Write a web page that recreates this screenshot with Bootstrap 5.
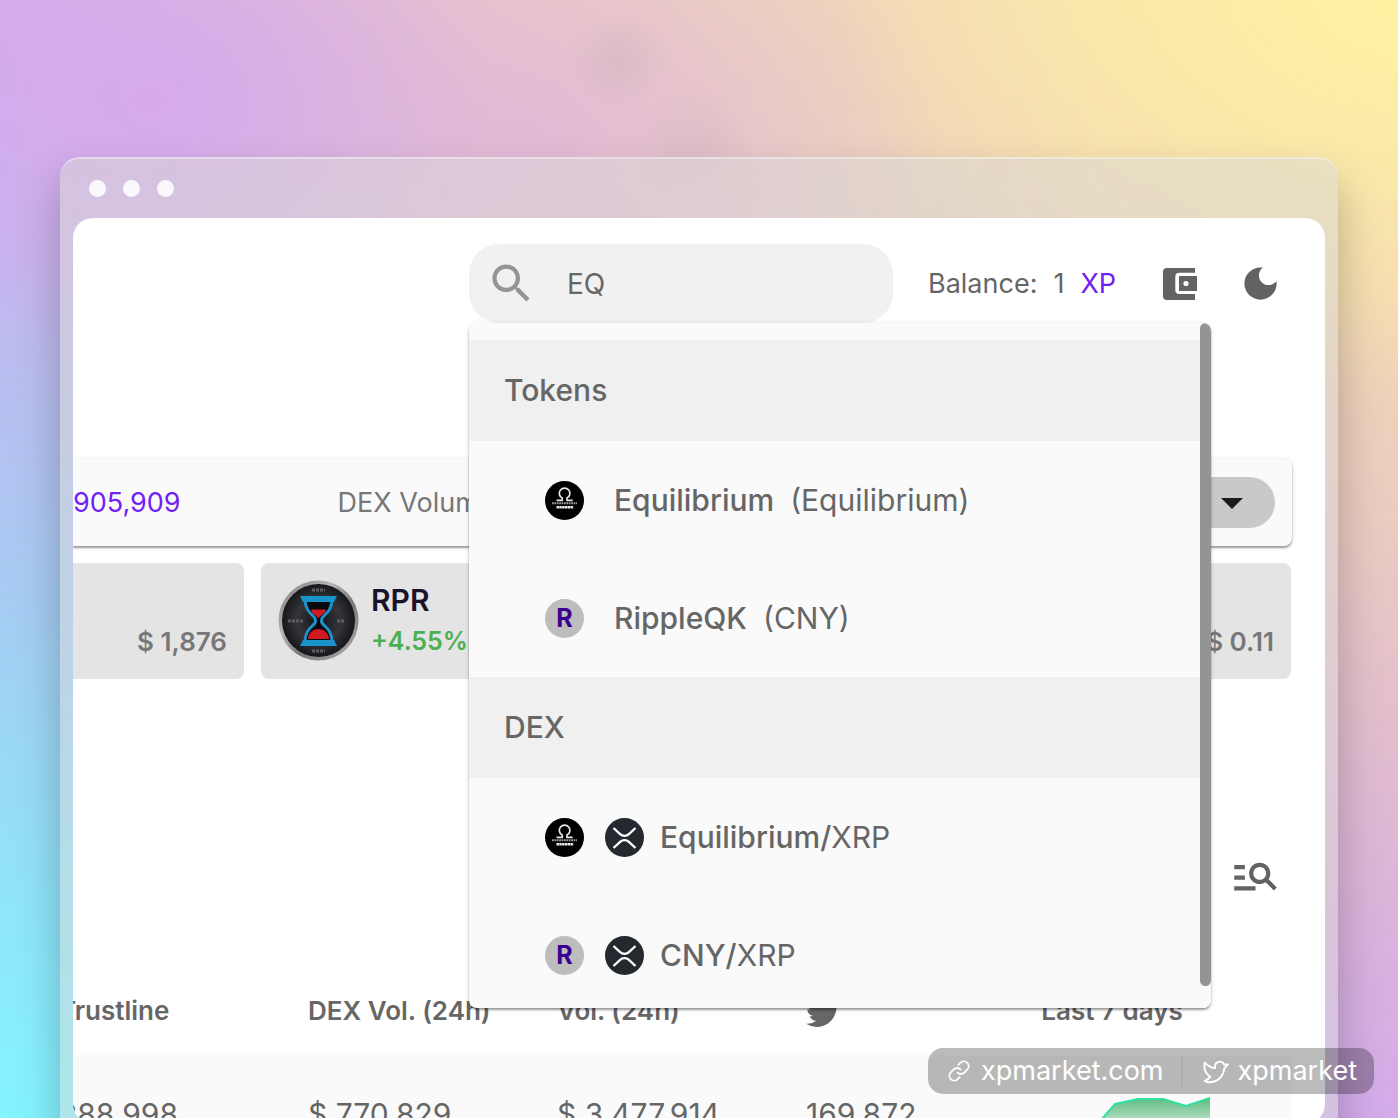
<!DOCTYPE html>
<html lang="en">
<head>
<meta charset="utf-8">
<meta name="viewport" content="width=device-width, initial-scale=1">
<title>XPmarket</title>
<link href="https://cdn.jsdelivr.net/npm/bootstrap@5.3.0/dist/css/bootstrap.min.css" rel="stylesheet">
<style>
  :root { --ink: #666; --violet: #7120f5; --paper: #fafafa; }
  body {
    height: 100vh; overflow: hidden; position: relative;
    font-family: Inter, "Liberation Sans", sans-serif; font-size: 27px; line-height: 36px; color: var(--ink);
    background: linear-gradient(180deg, #d3abef 0%, #c9b1ef 14%, #bdbbef 30%, #a5cdf3 55%, #90e4fa 80%, #84f4ff 100%);
  }
  .glow { position: absolute; inset: 0; z-index: -1; }
  .glow-left { background: radial-gradient(ellipse 340px 260px at 150px 100px, #d6a9ec 0%, #d6a9ec00 100%); }
  .glow-corner { background: radial-gradient(ellipse 560px 400px at 100% 0, #fff2a2 0%, #fdeaa800 100%); }
  .glow-smoke {
    background:
      radial-gradient(circle 50px at 620px 60px, #b8a8b040 0%, #b8a8b000 100%),
      radial-gradient(circle 60px at 695px 145px, #b8a8b030 0%, #b8a8b000 100%),
      radial-gradient(ellipse 420px 320px at 520px 150px, #e2b4dacc 0%, #e2b4da00 100%);
  }
  .glow-right {
    background: linear-gradient(190deg, #f6e0b0 0%, #f1d6b6 22%, #eaccc0 38%, #e3bfcc 52%, #dab3dc 68%, #d0a9ee 86%, #cfa9f0 100%);
    -webkit-mask-image: linear-gradient(80deg, transparent 10%, #000b 46%, #000 80%);
    mask-image: linear-gradient(80deg, transparent 10%, #000b 46%, #000 80%);
  }
  .stage { padding: 157px 60px 0; }
  .browser {
    padding: 0 13px 13px; border-radius: 20px; background: #d8d8d880;
    border-top: 2px solid #ffffff66;
    box-shadow: 0 24px 44px #00000040;
  }
  .browser-bar { height: 59px; padding-left: 16px; gap: 17px; }
  .dot { width: 17px; height: 17px; border-radius: 50%; background: #faf8fc; }
  .sheet { height: calc(100vh - 212px); background: #fff; border-radius: 20px; overflow: hidden; padding: 26px 33px 0 0; }

  .finder { position: relative; width: 424px; margin-right: 35px; }
  .finder-box { height: 79px; padding-left: 17px; gap: 30px; border-radius: 30px; background: #f1f1f1; color: #949494; }
  .finder-box input { border: 0; background: none; outline: 0; width: 260px; padding: 0; color: var(--ink); font-size: 28px; }
  .balance { width: 193px; margin-right: 35px; white-space: nowrap; }
  .header-tools { gap: 32px; }
  .plain-btn { border: 0; background: none; padding: 0; width: 48px; height: 48px; color: #636363; }
  .violet { color: var(--violet); }

  .results {
    position: absolute; top: 79px; left: 0; z-index: 5; width: 742px; height: 685px; overflow: hidden;
    padding-top: 17px; background: var(--paper); border-radius: 8px;
  }
  .results-shade { position: absolute; top: 79px; left: 0; z-index: 4; width: 742px; height: 685px; border-radius: 8px; box-shadow: 0 2px 2px #0005, 0 1px 5px #0002; }
  .group-title { height: 101px; padding-left: 35px; padding-bottom: 2px; margin: 0; background: #f0f0f0; font-size: 30px; font-weight: 500; line-height: 36px; }
  .hit { height: 118px; padding-left: 76px; color: var(--ink); text-decoration: none; white-space: nowrap; font-size: 30px; }
  .hit svg { flex: none; }
  .hit b { font-weight: 500; }
  .hit-token { gap: 30px; }
  .hit-pair { gap: 16px; }
  .coin-pair { gap: 21px; }
  .letter { width: 39px; height: 39px; border-radius: 50%; background: #bdbdbd; color: #3b0091; font-size: 25px; font-weight: 700; line-height: 39px; text-align: center; }
  .thumb { position: absolute; top: 0; right: 0; width: 11px; height: 663px; border-radius: 6px; background: #949494; }

  .stats { height: 87px; margin-top: 136px; padding-right: 17px; background: var(--paper); border-radius: 0 8px 8px 0; box-shadow: 0 2px 2px #0005, 0 1px 5px #0002; }
  .stat-name { margin-left: 157px; color: #777; }
  .period { position: relative; width: 150px; }
  .period select { appearance: none; width: 100%; height: 51px; border: 0; border-radius: 26px; background: #c9c9c9; padding-left: 20px; color: #1b1b1b; font-size: 20px; }
  .period svg { position: absolute; right: 32px; top: 21px; pointer-events: none; }

  .tickers { gap: 17px; margin-top: 17px; padding-right: 1px; }
  .ticker { flex: 0 0 332px; height: 116px; padding: 17px; border-radius: 8px; background: #e4e4e4; font-size: 26px; font-weight: 600; line-height: 41px; }
  .price { color: #777; font-weight: 600; }
  .ticker-name { color: #17132a; font-size: 30px; }
  .gain { color: #4caf50; font-size: 25px; }

  .tools { margin-top: 172px; padding-right: 13px; margin-bottom: 68px; }
  .tokens { table-layout: fixed; width: calc(100% + 14px); margin-left: -14px; }
  .tokens th { width: 249px; height: 88px; padding: 0; font-weight: 600; font-size: 26px; white-space: nowrap; }
  .tokens td { height: 118px; padding: 0; background: var(--paper); font-size: 30px; white-space: nowrap; }
  .tokens .followers { width: auto; }
  .tokens .spark { width: 278px; }
  .spark > div { width: 196px; text-align: center; }

  .credit { position: absolute; right: 24px; bottom: 24px; z-index: 10; height: 46px; border-radius: 15px; background: #00000044; padding: 0 17px; color: #fff; font-size: 27px; line-height: 46px; }
  .credit a { color: #fff; text-decoration: none; }
  .credit-rule { width: 2px; height: 30px; background: #0000000d; margin: 0 17px; }
</style>
<script src="https://cdn.jsdelivr.net/npm/bootstrap@5.3.0/dist/js/bootstrap.bundle.min.js"></script>
</head>
<body>
<div class="glow glow-right"></div>
<div class="glow glow-smoke"></div>
<div class="glow glow-left"></div>
<div class="glow glow-corner"></div>

<svg width="0" height="0" class="position-absolute" aria-hidden="true">
  <symbol id="eq" viewBox="0 0 39 39">
    <circle cx="19.500" cy="19.500" r="19.500" fill="#000"/>
    <path d="M11.500 19.300h5.700v-2.200a5.300 5.300 0 1 1 4.800 0v2.200h5.700" fill="none" stroke="#e4e4e4" stroke-width="1.700"/>
    <path d="M7 22.300h25" stroke="#999" stroke-width="2" stroke-dasharray="1.800 .6"/>
    <path d="M11.500 26.300h17" stroke="#eee" stroke-width="2.400" stroke-dasharray="2.400 .4"/>
  </symbol>
  <symbol id="xrp" viewBox="0 0 39 39">
    <circle cx="19.500" cy="19.500" r="19.500" fill="#23292f"/>
    <path d="M8.500 10l6.600 6.200a6.400 6.400 0 0 0 8.800 0L30.500 10M8.500 30l6.600-6.200a6.400 6.400 0 0 1 8.800 0L30.500 30" fill="none" stroke="#fff" stroke-width="2.300"/>
  </symbol>
</svg>

<main class="stage">
  <div class="browser">
    <div class="browser-bar d-flex align-items-center">
      <span class="dot"></span><span class="dot"></span><span class="dot"></span>
    </div>
    <div class="sheet">
      <header class="d-flex justify-content-end align-items-center pe-2">
        <div class="finder">
          <label class="finder-box d-flex align-items-center" for="find">
            <svg width="51" height="51" viewBox="0 0 24 24" fill="currentColor" role="img" aria-label="Search"><path d="M15.500 14h-.79l-.28-.27C15.410 12.590 16 11.110 16 9.500 16 5.910 13.090 3 9.500 3S3 5.910 3 9.500 5.910 16 9.500 16c1.610 0 3.090-.59 4.230-1.570l.27.28v.79l5 4.990L20.490 19l-4.990-5zm-6 0C7.010 14 5 11.990 5 9.500S7.010 5 9.500 5 14 7.010 14 9.500 11.990 14 9.500 14z"/></svg>
            <input id="find" type="text" value="EQ">
          </label>
          <div class="results-shade"></div>
          <div class="results">
            <h2 class="group-title d-flex align-items-center">Tokens</h2>
            <a class="hit hit-token d-flex align-items-center" href="#"><svg width="39" height="39"><use href="#eq"/></svg><span><b>Equilibrium</b><span class="ms-3">(Equilibrium)</span></span></a>
            <a class="hit hit-token d-flex align-items-center" href="#"><span class="letter">R</span><span><b>RippleQK</b><span class="ms-3">(CNY)</span></span></a>
            <h2 class="group-title d-flex align-items-center">DEX</h2>
            <a class="hit hit-pair d-flex align-items-center" href="#"><span class="coin-pair d-flex"><svg width="39" height="39"><use href="#eq"/></svg><svg width="39" height="39"><use href="#xrp"/></svg></span><span><b>Equilibrium/</b>XRP</span></a>
            <a class="hit hit-pair d-flex align-items-center" href="#"><span class="coin-pair d-flex"><span class="letter">R</span><svg width="39" height="39"><use href="#xrp"/></svg></span><span><b>CNY/</b>XRP</span></a>
            <div class="thumb"></div>
          </div>
        </div>
        <div class="balance d-flex"><span>Balance:</span><span class="ms-3">1</span><a href="#" class="violet text-decoration-none ms-3">XP</a></div>
        <div class="header-tools d-flex">
          <button class="plain-btn d-flex align-items-center justify-content-center" type="button" aria-label="Wallet">
            <svg width="34" height="32" viewBox="0 0 34 32" fill="currentColor"><path d="M32 0v4.700H16.300a4 4 0 0 0-4 4V22a4 4 0 0 0 4 4H32v6H4a4 4 0 0 1-4-4V4a4 4 0 0 1 4-4z"/><path fill-rule="evenodd" d="M16 8h18v15H16zM23 12.900a2.600 2.600 0 1 0 0 5.200 2.600 2.600 0 0 0 0-5.200z"/></svg>
          </button>
          <button class="plain-btn d-flex align-items-center justify-content-center" type="button" aria-label="Dark mode">
            <svg width="43" height="43" viewBox="0 0 24 24" fill="currentColor"><path d="M12 3c-4.970 0-9 4.030-9 9s4.030 9 9 9 9-4.030 9-9c0-.46-.04-.92-.1-1.360-.98 1.370-2.580 2.260-4.400 2.260-2.980 0-5.400-2.420-5.400-5.400 0-1.810.89-3.420 2.260-4.400-.44-.06-.9-.1-1.360-.1z"/></svg>
          </button>
        </div>
      </header>

      <section class="stats d-flex align-items-center">
        <span class="violet">905,909</span>
        <span class="stat-name">DEX Volume</span>
        <div class="period ms-auto">
          <select aria-label="Period"><option>24h</option><option>7d</option></select>
          <svg width="22" height="11" viewBox="0 0 22 11" aria-hidden="true"><path d="M0 0h22L11 11z" fill="#1b1b1b"/></svg>
        </div>
      </section>

      <section class="tickers d-flex justify-content-end">
        <div class="ticker d-flex align-items-end justify-content-end"><span class="price">$ 1,876</span></div>
        <div class="ticker d-flex">
          <svg class="flex-shrink-0" width="81" height="81" viewBox="0 0 81 81" role="img" aria-label="RPR token">
            <defs>
              <radialGradient id="dial"><stop offset="0" stop-color="#111218"/><stop offset=".6" stop-color="#34343a"/><stop offset="1" stop-color="#16171a"/></radialGradient>
              <linearGradient id="rim" x2="1" y2="1"><stop offset="0" stop-color="#777"/><stop offset=".35" stop-color="#bbb4b8"/><stop offset=".6" stop-color="#77777b"/><stop offset="1" stop-color="#b5aeb0"/></linearGradient>
            </defs>
            <circle cx="40.500" cy="40.500" r="40" fill="url(#rim)"/>
            <circle cx="40.500" cy="40.500" r="36.500" fill="url(#dial)"/>
            <g stroke="#5c5c60" stroke-width="3" stroke-dasharray="3 1"><path d="M34 10h13M10 41h15M59 41h8M34 71h13"/></g>
            <path d="M27 19c0 12 7 15 10 19q1 2.500 0 5c-3 4-10 7-10 19h27c0-12-7-15-10-19q-1-2.500 0-5c3-4 10-7 10-19z" fill="#08090c" stroke="#1993ca" stroke-width="3"/>
            <path d="M33 29.500h15c-1 5-5 5-7.500 9-2.500-4-6.500-4-7.500-9zM30 59c0-6 5-10 10.500-10S51 53 51 59z" fill="#cf1a20"/>
            <path d="M22 16h37l-3 6H25zM25 60h31l3 6H22z" fill="#1993ca"/>
          </svg>
          <div class="ps-2 ms-1"><div class="ticker-name">RPR</div><div class="gain">+4.55%</div></div>
        </div>
        <div class="ticker"></div>
        <div class="ticker d-flex align-items-end justify-content-end"><span class="price">$ 0.11</span></div>
      </section>

      <div class="tools d-flex justify-content-end">
        <button class="plain-btn d-flex align-items-center justify-content-center" type="button" aria-label="Filter tokens">
          <svg class="flex-shrink-0" width="51" height="51" viewBox="0 0 24 24" fill="currentColor"><path d="M7 9H2V7h5v2zm0 3H2v2h5v-2zm13.590 7l-3.830-3.830c-.8.52-1.740.83-2.760.83-2.760 0-5-2.240-5-5s2.240-5 5-5 5 2.240 5 5c0 1.020-.31 1.960-.83 2.750L22 17.590 20.590 19zM17 11c0-1.650-1.350-3-3-3s-3 1.350-3 3 1.350 3 3 3 3-1.350 3-3zM2 19h10v-2H2v2z"/></svg>
        </button>
      </div>

      <table class="tokens">
        <thead>
          <tr>
            <th scope="col">Trustline</th>
            <th scope="col">DEX Vol. (24h)</th>
            <th scope="col">Vol. (24h)</th>
            <th scope="col" class="followers"><svg width="34" height="34" viewBox="0 0 16 16" fill="currentColor" role="img" aria-label="Twitter followers"><path d="M5.026 15c6.038 0 9.341-5.003 9.341-9.334 0-.14 0-.282-.006-.422A6.685 6.685 0 0 0 16 3.542a6.658 6.658 0 0 1-1.889.518 3.301 3.301 0 0 0 1.447-1.817 6.533 6.533 0 0 1-2.087.793A3.286 3.286 0 0 0 7.875 6.030a9.325 9.325 0 0 1-6.767-3.429 3.289 3.289 0 0 0 1.018 4.382A3.323 3.323 0 0 1 .64 6.575v.045a3.288 3.288 0 0 0 2.632 3.218 3.203 3.203 0 0 1-.865.115 3.230 3.230 0 0 1-.614-.057 3.283 3.283 0 0 0 3.067 2.277A6.588 6.588 0 0 1 .78 13.580a6.320 6.320 0 0 1-.78-.045A9.344 9.344 0 0 0 5.026 15"/></svg></th>
            <th scope="col" class="spark"><div>Last 7 days</div></th>
          </tr>
        </thead>
        <tbody>
          <tr>
            <td>288,998</td>
            <td>$ 770,829</td>
            <td>$ 3,477,914</td>
            <td>169,872</td>
            <td class="spark"><div>
              <svg class="d-block" width="196" height="34" viewBox="0 0 196 34" role="img" aria-label="Price over the last 7 days">
                <defs><linearGradient id="fade" x2="0" y2="1"><stop offset="0" stop-color="#5fbb80"/><stop offset="1" stop-color="#5fbb8033"/></linearGradient></defs>
                <path d="M0 34L60 34 88 22 101 7 124 2h25l23 7 24-8v33z" fill="url(#fade)"/>
                <path d="M60 34L88 22 101 7 124 2h25l23 7 24-8" fill="none" stroke="#2fe0a0" stroke-width="2"/>
              </svg></div></td>
          </tr>
        </tbody>
      </table>
    </div>
  </div>
</main>

<footer class="credit d-flex align-items-center">
  <a href="#" class="d-flex align-items-center gap-2"><svg width="28" height="28" viewBox="0 0 256 256" fill="none" stroke="currentColor" stroke-width="17" stroke-linecap="round" stroke-linejoin="round"><path d="M122.300 71.400l19.800-19.800a44.100 44.100 0 0 1 62.300 62.300l-28.300 28.200a43.900 43.900 0 0 1-62.200 0"/><path d="M133.700 184.600l-19.800 19.800a44.100 44.100 0 0 1-62.300-62.300l28.300-28.200a43.900 43.900 0 0 1 62.200 0"/></svg><span>xpmarket.com</span></a>
  <span class="credit-rule"></span>
  <a href="#" class="d-flex align-items-center gap-2"><svg width="30" height="30" viewBox="0 0 256 256" fill="none" stroke="currentColor" stroke-width="16" stroke-linecap="round" stroke-linejoin="round"><path d="M128 88c0-22 18.500-40.300 40.500-40a40 40 0 0 1 36.200 24H240l-32.300 32.300A127.900 127.900 0 0 1 80 224c-32 0-40-12-40-12s32-12 48-36c0 0-64-32-48-120 0 0 40 40 88 48z"/></svg><span>xpmarket</span></a>
</footer>
</body>
</html>
